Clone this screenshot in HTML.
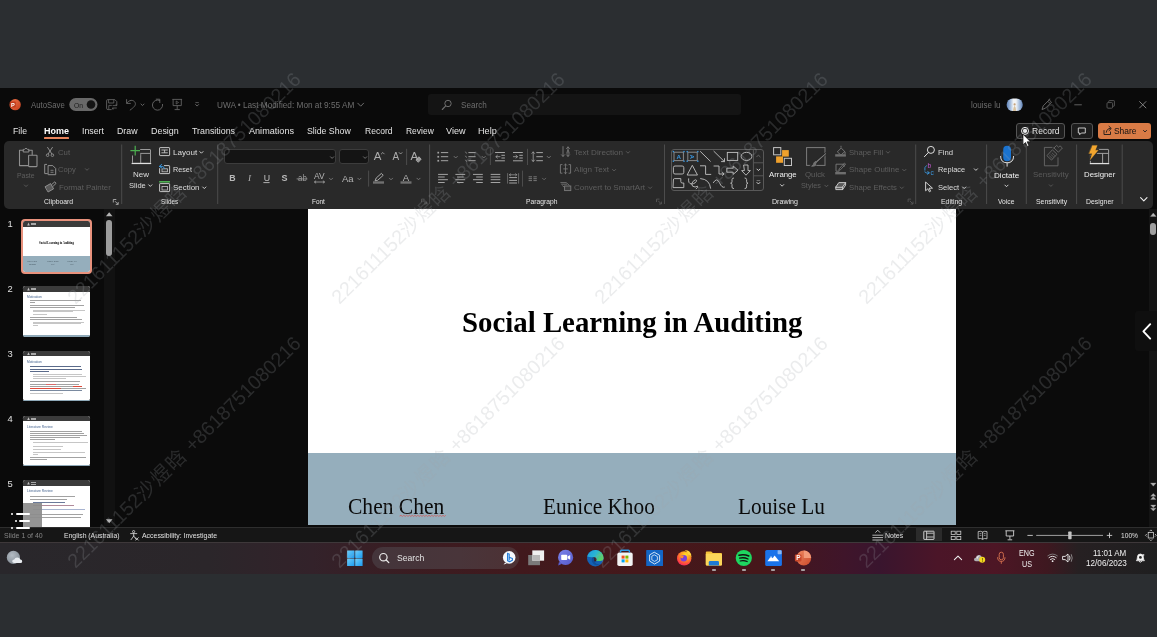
<!DOCTYPE html>
<html lang="en">
<head>
<meta charset="utf-8">
<title>Social Learning in Auditing - PowerPoint</title>
<style>
html,body{margin:0;padding:0}
#app{position:absolute;left:0;top:0;width:1157px;height:637px;will-change:transform}
body{width:1157px;height:637px;position:relative;overflow:hidden;background:#2b2e31;font-family:"Liberation Sans",sans-serif}
.b{position:absolute}
.t{position:absolute;white-space:nowrap;line-height:1;margin:0;padding:0;transform-origin:0 50%}
svg.ic{position:absolute;left:0;top:0;width:1157px;height:637px;overflow:visible}
.wm{position:absolute;white-space:nowrap;line-height:1;font-family:"Liberation Sans","Noto Sans CJK SC",sans-serif;font-size:19.7px;color:rgba(162,164,170,0.21);transform-origin:0 100%;transform:rotate(-44.7deg)}
.wc{letter-spacing:1.6px}
</style>
</head>
<body>
<div id="app">
<div class="b window" style="left:0px;top:88px;width:1157px;height:454px;background:#0a0a0a;"></div>
<div class="b ribbon" style="left:4px;top:141px;width:1149px;height:67.5px;background:#292929;border-radius:5px;"></div>
<div class="b pane-scroll" style="left:104px;top:209px;width:11px;height:317px;background:#111111;"></div>
<div class="b editor" style="left:115px;top:208.5px;width:1035px;height:317.5px;background:#0b0b0b;"></div>
<div class="b slide" style="left:308px;top:208.5px;width:648px;height:316.5px;background:#ffffff;"></div>
<div class="b slide-band" style="left:308px;top:453px;width:648px;height:72px;background:#95aebc;"></div>
<div class="b statusbar" style="left:0px;top:526.5px;width:1157px;height:15px;background:#161616;border-top:1px solid #2e2e2e;box-sizing:border-box;"></div>
<div class="b taskbar" style="left:0px;top:541.5px;width:1157px;height:32.3px;background:linear-gradient(to right,#29272b 0%,#2b262a 18%,#33222a 27%,#3b1c21 36%,#41191d 45%,#45181b 55%,#46171a 66%,#3f152a 73%,#39152e 76%,#4b1528 81%,#4d1625 86%,#3e1820 90.5%,#262022 93.2%,#1f1f20 100%);border-top:1px solid #3e383a;box-sizing:border-box;"></div>
<div class="b search" style="left:428.25px;top:94.25px;width:312.75px;height:20.5px;background:#141414;border-radius:3px;"></div>
<div class="b tab-underline" style="left:43.9px;top:137.4px;width:24.8px;height:1.3px;background:#e8845c;border-radius:0.6px;"></div>
<div class="b btn" style="left:1015.6px;top:123px;width:49.6px;height:15.8px;background:#1c1c1c;border-radius:3px;border:1px solid #555;box-sizing:border-box;"></div>
<div class="b btn" style="left:1071px;top:123px;width:21.5px;height:15.8px;background:#1d1d1d;border-radius:3px;border:1px solid #555;box-sizing:border-box;"></div>
<div class="b btn-share" style="left:1098px;top:123px;width:53.3px;height:15.8px;background:#d97b46;border-radius:3px;"></div>
<div class="b combo" style="left:224.2px;top:149.3px;width:112.1px;height:15px;background:#141414;border-radius:3px;border:1px solid #3c3c3c;box-sizing:border-box;"></div>
<div class="b combo" style="left:338.8px;top:149.3px;width:30.1px;height:15px;background:#141414;border-radius:3px;border:1px solid #3c3c3c;box-sizing:border-box;"></div>
<div class="b gallery" style="left:671.1px;top:149.1px;width:93px;height:41.5px;background:transparent;border-radius:3px;border:1px solid #595959;box-sizing:border-box;"></div>
<div class="b scroll-thumb" style="left:106.3px;top:219.8px;width:5.7px;height:35.8px;background:#9c9c9c;border-radius:2.9px;"></div>
<div class="b thumb-sel" style="left:20.5px;top:219.0px;width:71.8px;height:55.4px;background:#e8917c;border-radius:4px;"></div>
<div class="b thumb" style="left:22.8px;top:221.1px;width:66.9px;height:50.6px;background:#ffffff;border-radius:2.4px;"></div>
<div class="b " style="left:22.8px;top:221.1px;width:66.9px;height:5.7px;background:#3b3b3b;border-radius:2.4px 2.4px 0 0;"></div>
<div class="b " style="left:31.4px;top:222.79999999999998px;width:4.6px;height:0.9px;background:#a8a8a8;"></div>
<div class="b " style="left:31.4px;top:224.29999999999998px;width:4.6px;height:0.9px;background:#a8a8a8;"></div>
<div class="b " style="left:22.8px;top:256.1px;width:66.9px;height:16.1px;background:#95aebc;border-radius:0 0 2.4px 2.4px;"></div>
<div class="b thumb" style="left:22.8px;top:286.1px;width:66.9px;height:50.6px;background:#ffffff;border-radius:2.4px;"></div>
<div class="b " style="left:22.8px;top:286.1px;width:66.9px;height:5.7px;background:#3b3b3b;border-radius:2.4px 2.4px 0 0;"></div>
<div class="b " style="left:31.4px;top:287.8px;width:4.6px;height:0.9px;background:#a8a8a8;"></div>
<div class="b " style="left:31.4px;top:289.3px;width:4.6px;height:0.9px;background:#a8a8a8;"></div>
<div class="b " style="left:22.8px;top:334.80000000000007px;width:66.9px;height:1.9px;background:#8fa9b8;border-radius:0 0 2.4px 2.4px;"></div>
<div class="b " style="left:29.56px;top:299.85px;width:51.35px;height:0.9px;background:#a2a2a2;"></div>
<div class="b " style="left:29.56px;top:301.95px;width:5.19px;height:0.9px;background:#a2a2a2;"></div>
<div class="b " style="left:29.56px;top:304.85px;width:54.25px;height:0.9px;background:#a2a2a2;"></div>
<div class="b " style="left:29.56px;top:306.95px;width:45.12px;height:0.9px;background:#a2a2a2;"></div>
<div class="b " style="left:32.68px;top:309.75px;width:51.87px;height:0.9px;background:#c6c6c6;"></div>
<div class="b " style="left:32.68px;top:311.05px;width:40.46px;height:0.9px;background:#c6c6c6;"></div>
<div class="b " style="left:32.68px;top:313.85px;width:14.0px;height:0.9px;background:#c6c6c6;"></div>
<div class="b " style="left:29.56px;top:316.95px;width:47.2px;height:0.9px;background:#a2a2a2;"></div>
<div class="b " style="left:29.56px;top:318.85px;width:52.39px;height:0.9px;background:#a2a2a2;"></div>
<div class="b " style="left:32.68px;top:321.95px;width:50.83px;height:0.9px;background:#c6c6c6;"></div>
<div class="b " style="left:32.68px;top:323.15px;width:48.24px;height:0.9px;background:#c6c6c6;"></div>
<div class="b " style="left:32.68px;top:324.75px;width:5.19px;height:0.9px;background:#c6c6c6;"></div>
<div class="b thumb" style="left:22.8px;top:350.8px;width:66.9px;height:50.6px;background:#ffffff;border-radius:2.4px;"></div>
<div class="b " style="left:22.8px;top:350.8px;width:66.9px;height:5.7px;background:#3b3b3b;border-radius:2.4px 2.4px 0 0;"></div>
<div class="b " style="left:31.4px;top:352.5px;width:4.6px;height:0.9px;background:#a8a8a8;"></div>
<div class="b " style="left:31.4px;top:354.0px;width:4.6px;height:0.9px;background:#a8a8a8;"></div>
<div class="b " style="left:22.8px;top:399.50000000000006px;width:66.9px;height:1.9px;background:#8fa9b8;border-radius:0 0 2.4px 2.4px;"></div>
<div class="b " style="left:29.56px;top:365.95px;width:51.35px;height:0.9px;background:#5a6a8a;"></div>
<div class="b " style="left:29.56px;top:368.75px;width:52.39px;height:0.9px;background:#5a6a8a;"></div>
<div class="b " style="left:29.56px;top:370.95px;width:19.19px;height:0.9px;background:#5a6a8a;"></div>
<div class="b " style="left:32.68px;top:374.05px;width:49.27px;height:0.9px;background:#c6c6c6;"></div>
<div class="b " style="left:32.68px;top:376.05px;width:52.9px;height:0.9px;background:#c6c6c6;"></div>
<div class="b " style="left:32.68px;top:377.85px;width:33.71px;height:0.9px;background:#c6c6c6;"></div>
<div class="b " style="left:29.56px;top:381.25px;width:50.31px;height:0.9px;background:#a2a2a2;"></div>
<div class="b " style="left:29.56px;top:383.85px;width:49.27px;height:0.9px;background:#a2a2a2;"></div>
<div class="b " style="left:45.64px;top:383.85px;width:10.37px;height:0.9px;background:#d86a6a;"></div>
<div class="b " style="left:29.56px;top:385.95px;width:52.39px;height:0.9px;background:#a2a2a2;"></div>
<div class="b " style="left:72.61px;top:385.95px;width:9.34px;height:0.9px;background:#e04a3a;"></div>
<div class="b " style="left:29.56px;top:388.25px;width:56.02px;height:0.9px;background:#a2a2a2;"></div>
<div class="b " style="left:29.56px;top:388.25px;width:31.64px;height:0.9px;background:#e04a3a;"></div>
<div class="b " style="left:29.56px;top:390.35px;width:52.39px;height:0.9px;background:#7a8aa0;"></div>
<div class="b " style="left:29.56px;top:392.65px;width:33.2px;height:0.9px;background:#c6c6c6;"></div>
<div class="b thumb" style="left:22.8px;top:415.8px;width:66.9px;height:50.6px;background:#ffffff;border-radius:2.4px;"></div>
<div class="b " style="left:22.8px;top:415.8px;width:66.9px;height:5.7px;background:#3b3b3b;border-radius:2.4px 2.4px 0 0;"></div>
<div class="b " style="left:31.4px;top:417.5px;width:4.6px;height:0.9px;background:#a8a8a8;"></div>
<div class="b " style="left:31.4px;top:419.0px;width:4.6px;height:0.9px;background:#a8a8a8;"></div>
<div class="b " style="left:22.8px;top:464.50000000000006px;width:66.9px;height:1.9px;background:#8fa9b8;border-radius:0 0 2.4px 2.4px;"></div>
<div class="b " style="left:29.56px;top:430.55px;width:52.39px;height:0.9px;background:#a2a2a2;"></div>
<div class="b " style="left:29.56px;top:432.75px;width:54.46px;height:0.9px;background:#a2a2a2;"></div>
<div class="b " style="left:29.56px;top:434.85px;width:57.57px;height:0.9px;background:#a2a2a2;"></div>
<div class="b " style="left:29.56px;top:436.95px;width:50.83px;height:0.9px;background:#a2a2a2;"></div>
<div class="b " style="left:29.56px;top:438.65px;width:25.41px;height:0.9px;background:#a2a2a2;"></div>
<div class="b " style="left:32.68px;top:441.95px;width:54.98px;height:0.9px;background:#c6c6c6;"></div>
<div class="b " style="left:32.68px;top:445.65px;width:30.6px;height:0.9px;background:#c6c6c6;"></div>
<div class="b " style="left:32.68px;top:448.85px;width:28.53px;height:0.9px;background:#c6c6c6;"></div>
<div class="b " style="left:32.68px;top:451.95px;width:52.39px;height:0.9px;background:#c6c6c6;"></div>
<div class="b " style="left:32.68px;top:453.95px;width:5.19px;height:0.9px;background:#c6c6c6;"></div>
<div class="b " style="left:29.56px;top:457.15px;width:56.54px;height:0.9px;background:#a2a2a2;"></div>
<div class="b " style="left:29.56px;top:459.25px;width:17.63px;height:0.9px;background:#a2a2a2;"></div>
<div class="b thumb" style="left:22.8px;top:480.3px;width:66.9px;height:46.5px;background:#ffffff;border-radius:2.4px 2.4px 0 0;"></div>
<div class="b " style="left:22.8px;top:480.3px;width:66.9px;height:5.7px;background:#3b3b3b;border-radius:2.4px 2.4px 0 0;"></div>
<div class="b " style="left:31.4px;top:482.0px;width:4.6px;height:0.9px;background:#a8a8a8;"></div>
<div class="b " style="left:31.4px;top:483.5px;width:4.6px;height:0.9px;background:#a8a8a8;"></div>
<div class="b " style="left:29.56px;top:496.15px;width:45.12px;height:0.9px;background:#a2a2a2;"></div>
<div class="b " style="left:29.56px;top:498.55px;width:37.86px;height:0.9px;background:#a2a2a2;"></div>
<div class="b " style="left:32.68px;top:501.85px;width:32.16px;height:0.9px;background:#6a7a9a;"></div>
<div class="b " style="left:32.68px;top:505.05px;width:41.49px;height:0.9px;background:#b08a9a;"></div>
<div class="b " style="left:32.68px;top:508.55px;width:52.39px;height:0.9px;background:#a8b4d0;"></div>
<div class="b " style="left:29.56px;top:514.05px;width:53.42px;height:0.9px;background:#a2a2a2;"></div>
<div class="b " style="left:29.56px;top:516.65px;width:51.87px;height:0.9px;background:#a2a2a2;"></div>
<div class="b float-btn" style="left:22.8px;top:503.1px;width:19.2px;height:23.7px;background:rgba(140,140,140,0.93);"></div>
<div class="b " style="left:10.9px;top:512.5px;width:2.6px;height:2.6px;background:#ffffff;border-radius:1.3px;"></div>
<div class="b " style="left:16.1px;top:512.5px;width:14.0px;height:2.6px;background:#ffffff;border-radius:1.3px;"></div>
<div class="b " style="left:14.5px;top:519.5px;width:2.6px;height:2.6px;background:#ffffff;border-radius:1.3px;"></div>
<div class="b " style="left:19.2px;top:519.5px;width:10.900000000000002px;height:2.6px;background:#ffffff;border-radius:1.3px;"></div>
<div class="b " style="left:10.9px;top:526.7px;width:2.6px;height:2.6px;background:#ffffff;border-radius:1.3px;"></div>
<div class="b " style="left:16.1px;top:526.7px;width:14.0px;height:2.6px;background:#ffffff;border-radius:1.3px;"></div>
<div class="b editor-scroll" style="left:1149.4px;top:209px;width:7.6px;height:317.5px;background:#141414;"></div>
<div class="b scroll-thumb" style="left:1150.4px;top:222.8px;width:5.8px;height:12px;background:#a0a0a0;border-radius:2.9px;"></div>
<div class="b pane-toggle" style="left:1134.6px;top:310.6px;width:22.4px;height:40.4px;background:#0f0f0f;border-radius:3px 0 0 3px;"></div>
<div class="b view-sel" style="left:915.5px;top:527.4px;width:26.8px;height:14.1px;background:#2b2b2b;"></div>
<div class="b tb-search" style="left:371.6px;top:546.8px;width:147px;height:22px;background:linear-gradient(to right,#44353b,#49353a 60%,#4d3134);border-radius:11px;"></div>
<div class="b tb-ind" style="left:711.9px;top:569px;width:4.2px;height:1.6px;background:#a6a0a2;border-radius:0.8px;"></div>
<div class="b tb-ind" style="left:741.6999999999999px;top:569px;width:4.2px;height:1.6px;background:#a6a0a2;border-radius:0.8px;"></div>
<div class="b tb-ind" style="left:771.1999999999999px;top:569px;width:4.2px;height:1.6px;background:#a6a0a2;border-radius:0.8px;"></div>
<div class="b tb-ind" style="left:800.9px;top:569px;width:4.2px;height:1.6px;background:#a6a0a2;border-radius:0.8px;"></div>
<svg class="ic" viewBox="0 0 1157 637" width="1157" height="637">
<defs><linearGradient id="ppg" x1="0" y1="0" x2="1" y2="1"><stop offset="0" stop-color="#f0744a"/><stop offset="1" stop-color="#c43e1c"/></linearGradient></defs>
<circle cx="15.2" cy="104.7" r="5.6" stroke="none" stroke-width="0" fill="url(#ppg)" />
<rect x="9.8" y="101.6" width="6" height="6" rx="1" stroke="none" stroke-width="0" fill="#c13b1b" />
<text x="11.1" y="106.6" font-family="Liberation Sans, sans-serif" font-size="5.6" font-weight="bold" fill="#fff">P</text>
<rect x="69.25" y="98" width="28.25" height="13" rx="6.5" stroke="none" stroke-width="0" fill="#686868" />
<circle cx="91" cy="104.5" r="4.3" stroke="none" stroke-width="0" fill="#141414" />
<path d="M111.6,109.6 h-3.6 q-1.4,0 -1.4,-1.4 v-7.4 q0,-1.2 1.2,-1.2 h7 l2,2 v3" stroke="#686868" stroke-width="0.85" fill="none" stroke-linejoin="round"/>
<path d="M108.6,99.8 v3.2 h5.2 v-3.2 M108.8,109.4 v-4 h3" stroke="#686868" stroke-width="0.8" fill="none" />
<path d="M112.6,105.6 h4.2 v-1.4 M116.8,108 h-4.2 v1.4 M115.6,104.4 l1.3,1.2 M113.8,109.2 l-1.3,-1.2" stroke="#686868" stroke-width="0.8" fill="none" stroke-linejoin="round"/>
<path d="M126.6,99.6 v3.8 h3.8 M126.9,103.2 c2,-3.6 6.6,-3.8 8.2,-0.6 c1.2,2.8 -1.4,4.8 -4.9,7.4" stroke="#686868" stroke-width="0.9" fill="none" stroke-linecap="round" stroke-linejoin="round"/>
<path d="M140.988,104.044 L142.5,105.556 L144.012,104.044" stroke="#6e6e6e" stroke-width="0.9" fill="none" stroke-linecap="round" stroke-linejoin="round"/>
<path d="M159.6,100.4 a5.1,5.1 0 1 0 3,4" stroke="#686868" stroke-width="0.9" fill="none" stroke-linecap="round"/>
<path d="M156.2,99.2 h3.6 v3.4" stroke="#686868" stroke-width="0.9" fill="none" stroke-linecap="round" stroke-linejoin="round"/>
<path d="M172.3,99.4 h9.8 M173.1,99.4 v6.2 h8.2 v-6.2 M177.2,105.6 v3.8 M174.6,109.6 h5.2" stroke="#686868" stroke-width="0.85" fill="none" />
<path d="M176.2,101 v3 l2.3,-1.5 z" stroke="#686868" stroke-width="0.7" fill="none" />
<path d="M195.4,102.6 h3.4" stroke="#686868" stroke-width="0.8" fill="none" />
<path d="M195.588,104.544 L197.1,106.056 L198.612,104.544" stroke="#6e6e6e" stroke-width="0.9" fill="none" stroke-linecap="round" stroke-linejoin="round"/>
<path d="M357.8,103.2 l2.9,3 l2.9,-3" stroke="#6e6e6e" stroke-width="1" fill="none" stroke-linecap="round" stroke-linejoin="round"/>
<circle cx="448" cy="103.5" r="3.2" stroke="#6e6e6e" stroke-width="1" fill="none" />
<path d="M445.7,105.9 l-3.4,3.6" stroke="#6e6e6e" stroke-width="1.1" fill="none" stroke-linecap="round"/>
<defs><linearGradient id="av" x1="0" y1="0" x2="1" y2="0"><stop offset="0" stop-color="#5d7fb4"/><stop offset="0.22" stop-color="#9fb9dc"/><stop offset="0.42" stop-color="#f2f4f6"/><stop offset="0.58" stop-color="#f2f4f6"/><stop offset="0.78" stop-color="#a9c0de"/><stop offset="1" stop-color="#5d7fb4"/></linearGradient></defs>
<rect x="1006.6" y="98.5" width="16.2" height="12.6" rx="6.3" stroke="none" stroke-width="0" fill="url(#av)" />
<path d="M1013,111 q0.2,-4 1.6,-5.2 q1.4,1.2 1.6,5.2 z" stroke="none" stroke-width="0" fill="#d8c2a0" />
<circle cx="1014.6" cy="104.4" r="1.1" stroke="none" stroke-width="0" fill="#c4a27e" />
<path d="M1042,109.5 l1.2,-3.6 l6,-6 l2.3,2.3 l-6,6 z M1047.8,101.3 l2.3,2.3" stroke="#6e6e6e" stroke-width="0.9" fill="none" stroke-linejoin="round"/>
<path d="M1048.6,99.6 l1.6,-0.6" stroke="#6e6e6e" stroke-width="0.9" fill="none" />
<line x1="1074.3" y1="104.8" x2="1081.8" y2="104.8" stroke="#6a6a6a" stroke-width="0.9" />
<rect x="1107" y="102.6" width="5.6" height="5.6" rx="1" stroke="#5e5e5e" stroke-width="0.85" fill="none" />
<path d="M1108.8,102.4 v-1.2 q0,-0.6 0.6,-0.6 h4.4 q0.6,0 0.6,0.6 v4.4 q0,0.6 -0.6,0.6 h-1.1" stroke="#5e5e5e" stroke-width="0.85" fill="none" />
<path d="M1139.3,101.3 l6.9,6.9 M1146.2,101.3 l-6.9,6.9" stroke="#8a8a8a" stroke-width="0.9" fill="none" />
<circle cx="1025" cy="130.9" r="3.5" stroke="#f0f0f0" stroke-width="1" fill="none" />
<circle cx="1025" cy="130.9" r="2.1" stroke="none" stroke-width="0" fill="#f4f4f4" />
<path d="M1078.3,128 h7 v5 h-4 l-1.6,1.7 v-1.7 h-1.4 z" stroke="#d8d8d8" stroke-width="0.9" fill="none" stroke-linejoin="round"/>
<path d="M1104,130.5 v4 h6.5 v-2.5 M1106.3,132.3 c0.3,-2.5 1.8,-3.8 4,-3.9 M1109,126.3 l2.3,2.2 l-2.3,2.2" stroke="#1a1a1a" stroke-width="0.9" fill="none" stroke-linejoin="round" stroke-linecap="round"/>
<path d="M1143.488,130.444 L1145,131.956 L1146.512,130.444" stroke="#1a1a1a" stroke-width="0.9" fill="none" stroke-linecap="round" stroke-linejoin="round"/>
<path d="M23.2,150.3 h-3.7 v15.3 h8.6 M28.9,150.3 h3.3 v4.3" stroke="#8f8f8f" stroke-width="1.1" fill="none" stroke-linejoin="round" stroke-linecap="round"/>
<path d="M23.2,151.6 v-2.2 h1.2 q1.6,-2.4 3.2,0 h1.3 v2.2 z" stroke="#8f8f8f" stroke-width="1" fill="none" stroke-linejoin="round" stroke-linecap="round"/>
<rect x="28.6" y="155.2" width="8.4" height="11.4" rx="0.6" stroke="#8f8f8f" stroke-width="1.1" fill="none" />
<path d="M24.404,185.002 L26,186.598 L27.596,185.002" stroke="#5e5e5e" stroke-width="0.9" fill="none" stroke-linecap="round" stroke-linejoin="round"/>
<path d="M47.6,147.4 l4.3,6.6 M52.4,147.4 l-4.3,6.6" stroke="#8f8f8f" stroke-width="1" fill="none" stroke-linejoin="round" stroke-linecap="round"/>
<circle cx="47.6" cy="155.2" r="1.3" stroke="#8f8f8f" stroke-width="0.9" fill="none" />
<circle cx="52.4" cy="155.2" r="1.3" stroke="#8f8f8f" stroke-width="0.9" fill="none" />
<path d="M46.6,164.4 h-1.9 v9.2 h2.6" stroke="#8f8f8f" stroke-width="1" fill="none" stroke-linejoin="round" stroke-linecap="round"/>
<path d="M48.5,165.6 h4.3 l2.9,2.9 v6.2 h-7.2 z" stroke="#8f8f8f" stroke-width="1" fill="none" stroke-linejoin="round" stroke-linecap="round"/>
<path d="M50.5,170.3 h3 M50.5,172.3 h3" stroke="#8f8f8f" stroke-width="0.8" fill="none" />
<path d="M85.404,168.702 L87,170.298 L88.596,168.702" stroke="#5e5e5e" stroke-width="0.9" fill="none" stroke-linecap="round" stroke-linejoin="round"/>
<path d="M45.4,186.6 l5.2,-3 l3,5.2 l-5.2,3 z" stroke="#8f8f8f" stroke-width="1" fill="#5a5a5a" stroke-linejoin="round" stroke-linecap="round"/>
<path d="M51.8,184.4 l3,-2.6 l1.2,1.6 l-2.6,2.6" stroke="#8f8f8f" stroke-width="1" fill="none" stroke-linejoin="round" stroke-linecap="round"/>
<path d="M113.3,202.5 V199.5 H116.3" stroke="#bdbdbd" stroke-width="0.8" fill="none" />
<path d="M115.0,201.2 L118.0,204.2 M118.2,202 V204.4 H115.8" stroke="#bdbdbd" stroke-width="0.8" fill="none" />
<line x1="121.7" y1="144.5" x2="121.7" y2="204" stroke="#4c4c4c" stroke-width="1" />
<rect x="132.5" y="149.5" width="18" height="13.8" rx="0.5" stroke="#9a9a9a" stroke-width="1" fill="none" />
<line x1="132.5" y1="153.4" x2="150.5" y2="153.4" stroke="#9a9a9a" stroke-width="1" />
<line x1="140.7" y1="153.4" x2="140.7" y2="163.3" stroke="#9a9a9a" stroke-width="1" />
<line x1="131.6" y1="163.5" x2="151.2" y2="163.5" stroke="#e0e0e0" stroke-width="1.2" />
<rect x="130.3" y="145.6" width="9.9" height="9.9" rx="0" stroke="none" stroke-width="0" fill="#292929" />
<path d="M135.2,145.8 v9.7 M130.4,150.6 h9.6" stroke="#4caf50" stroke-width="1.2" fill="none" />
<path d="M148.704,184.802 L150.3,186.398 L151.89600000000002,184.802" stroke="#dedede" stroke-width="0.9" fill="none" stroke-linecap="round" stroke-linejoin="round"/>
<rect x="159.6" y="147.6" width="10" height="8" rx="0.5" stroke="#c4c4c4" stroke-width="1" fill="none" />
<path d="M161.4,150 h6.4 M161.4,152.8 h6.4 M164.6,150 v2.8" stroke="#c4c4c4" stroke-width="0.9" fill="none" />
<path d="M199.804,151.602 L201.4,153.198 L202.996,151.602" stroke="#dedede" stroke-width="0.9" fill="none" stroke-linecap="round" stroke-linejoin="round"/>
<rect x="159.6" y="165.6" width="10" height="8" rx="0.5" stroke="#c4c4c4" stroke-width="1" fill="none" />
<rect x="162" y="168.8" width="5.4" height="3" rx="0" stroke="#c4c4c4" stroke-width="0.8" fill="#3a3a3a" />
<rect x="158.6" y="163.6" width="5.4" height="4.6" rx="0" stroke="none" stroke-width="0" fill="#292929" />
<path d="M159.4,166.4 l2.2,-2 M159.4,166.4 l2.4,1.6 M159.6,166.4 h2.6 q2,0.1 2.2,2.2" stroke="#3a96dd" stroke-width="1" fill="none" stroke-linejoin="round" stroke-linecap="round"/>
<rect x="159.6" y="183.6" width="10" height="8" rx="0.5" stroke="#c4c4c4" stroke-width="1" fill="none" />
<rect x="162" y="186.4" width="5.4" height="3.6" rx="0" stroke="#c4c4c4" stroke-width="0.8" fill="none" />
<line x1="159.2" y1="181.8" x2="170" y2="181.8" stroke="#4caf50" stroke-width="1.6" />
<path d="M202.704,187.002 L204.3,188.598 L205.89600000000002,187.002" stroke="#dedede" stroke-width="0.9" fill="none" stroke-linecap="round" stroke-linejoin="round"/>
<line x1="217.7" y1="144.5" x2="217.7" y2="204" stroke="#4c4c4c" stroke-width="1" />
<path d="M330.504,156.802 L332.1,158.398 L333.696,156.802" stroke="#7a7a7a" stroke-width="0.9" fill="none" stroke-linecap="round" stroke-linejoin="round"/>
<path d="M363.504,156.802 L365.1,158.398 L366.696,156.802" stroke="#7a7a7a" stroke-width="0.9" fill="none" stroke-linecap="round" stroke-linejoin="round"/>
<path d="M381.4,153.9 l1.4,-1.4 l1.4,1.4" stroke="#adadad" stroke-width="0.8" fill="none" stroke-linejoin="round" stroke-linecap="round"/>
<path d="M399.2,152.6 l1.4,1.4 l1.4,-1.4" stroke="#adadad" stroke-width="0.8" fill="none" stroke-linejoin="round" stroke-linecap="round"/>
<line x1="406.6" y1="148.8" x2="406.6" y2="165" stroke="#4c4c4c" stroke-width="1" />
<path d="M416.2,159.8 l2.6,-3 l2.4,2.2 l-2.6,3 z" stroke="#adadad" stroke-width="0.9" fill="#9a9a9a" stroke-linejoin="round" stroke-linecap="round"/>
<line x1="263.4" y1="182.6" x2="269.6" y2="182.6" stroke="#c0c0c0" stroke-width="0.9" />
<line x1="296.6" y1="178.9" x2="307.4" y2="178.9" stroke="#9a9a9a" stroke-width="0.8" />
<path d="M314.6,182 h9.8 M315.8,180.9 l-1.3,1.1 l1.3,1.1 M323.2,180.9 l1.3,1.1 l-1.3,1.1" stroke="#b4b4b4" stroke-width="0.7" fill="none" stroke-linejoin="round" stroke-linecap="round"/>
<path d="M329.404,178.202 L331,179.798 L332.596,178.202" stroke="#7a7a7a" stroke-width="0.9" fill="none" stroke-linecap="round" stroke-linejoin="round"/>
<path d="M357.804,178.202 L359.4,179.798 L360.996,178.202" stroke="#7a7a7a" stroke-width="0.9" fill="none" stroke-linecap="round" stroke-linejoin="round"/>
<line x1="368.6" y1="170.6" x2="368.6" y2="186.6" stroke="#4c4c4c" stroke-width="1" />
<path d="M375.2,180.6 l1,-2.6 l5.2,-4.6 l1.8,1.9 l-5.2,4.7 z" stroke="#b4b4b4" stroke-width="0.9" fill="none" stroke-linejoin="round" stroke-linecap="round"/>
<rect x="373" y="181.3" width="11" height="2.4" rx="0" stroke="none" stroke-width="0" fill="#707070" />
<path d="M389.404,178.202 L391,179.798 L392.596,178.202" stroke="#7a7a7a" stroke-width="0.9" fill="none" stroke-linecap="round" stroke-linejoin="round"/>
<rect x="400.5" y="181.3" width="11" height="2.4" rx="0" stroke="none" stroke-width="0" fill="#707070" />
<path d="M416.904,178.202 L418.5,179.798 L420.096,178.202" stroke="#7a7a7a" stroke-width="0.9" fill="none" stroke-linecap="round" stroke-linejoin="round"/>
<path d="M421.5,202.1 V199.1 H424.5" stroke="#5c5c5c" stroke-width="0.8" fill="none" />
<path d="M423.2,200.79999999999998 L426.2,203.79999999999998 M426.4,201.6 V204.0 H424" stroke="#5c5c5c" stroke-width="0.8" fill="none" />
<line x1="429.6" y1="144.5" x2="429.6" y2="204" stroke="#4c4c4c" stroke-width="1" />
<rect x="437.4" y="151.79999999999998" width="1.7" height="1.7" rx="0" stroke="none" stroke-width="0" fill="#a4a4a4" />
<line x1="440.9" y1="152.6" x2="448.2" y2="152.6" stroke="#a4a4a4" stroke-width="1" />
<rect x="437.4" y="155.89999999999998" width="1.7" height="1.7" rx="0" stroke="none" stroke-width="0" fill="#a4a4a4" />
<line x1="440.9" y1="156.7" x2="448.2" y2="156.7" stroke="#a4a4a4" stroke-width="1" />
<rect x="437.4" y="159.89999999999998" width="1.7" height="1.7" rx="0" stroke="none" stroke-width="0" fill="#a4a4a4" />
<line x1="440.9" y1="160.7" x2="448.2" y2="160.7" stroke="#a4a4a4" stroke-width="1" />
<path d="M454.104,156.402 L455.7,157.998 L457.296,156.402" stroke="#7a7a7a" stroke-width="0.9" fill="none" stroke-linecap="round" stroke-linejoin="round"/>
<line x1="465.4" y1="151.7" x2="466.6" y2="153.5" stroke="#a4a4a4" stroke-width="0.7" />
<line x1="468.4" y1="152.6" x2="475.6" y2="152.6" stroke="#a4a4a4" stroke-width="1" />
<line x1="465.4" y1="155.79999999999998" x2="466.6" y2="157.6" stroke="#a4a4a4" stroke-width="0.7" />
<line x1="468.4" y1="156.7" x2="475.6" y2="156.7" stroke="#a4a4a4" stroke-width="1" />
<line x1="465.4" y1="159.79999999999998" x2="466.6" y2="161.6" stroke="#a4a4a4" stroke-width="0.7" />
<line x1="468.4" y1="160.7" x2="475.6" y2="160.7" stroke="#a4a4a4" stroke-width="1" />
<path d="M482.104,156.402 L483.7,157.998 L485.296,156.402" stroke="#7a7a7a" stroke-width="0.9" fill="none" stroke-linecap="round" stroke-linejoin="round"/>
<line x1="490.4" y1="148.8" x2="490.4" y2="165" stroke="#4c4c4c" stroke-width="1" />
<path d="M495.1,152.5 h9.8 M495.1,160.8 h9.8 M501.4,155.3 h3.5 M501.4,158 h3.5" stroke="#a4a4a4" stroke-width="1" fill="none" />
<path d="M496,156.7 h4 M497.4,155.3 l-1.5,1.4 l1.5,1.4" stroke="#a4a4a4" stroke-width="0.8" fill="none" stroke-linejoin="round" stroke-linecap="round"/>
<path d="M513,152.5 h9.8 M513,160.8 h9.8 M519.3,155.3 h3.5 M519.3,158 h3.5" stroke="#a4a4a4" stroke-width="1" fill="none" />
<path d="M513.4,156.7 h4 M516,155.3 l1.5,1.4 l-1.5,1.4" stroke="#a4a4a4" stroke-width="0.8" fill="none" stroke-linejoin="round" stroke-linecap="round"/>
<line x1="527.5" y1="148.8" x2="527.5" y2="165" stroke="#4c4c4c" stroke-width="1" />
<path d="M536.3,152.6 h6.6 M536.3,156.7 h6.6 M536.3,160.7 h6.6" stroke="#a4a4a4" stroke-width="1" fill="none" />
<path d="M533.2,152 v9.4 M531.9,153.4 l1.3,-1.5 l1.3,1.5 M531.9,160 l1.3,1.5 l1.3,-1.5" stroke="#a4a4a4" stroke-width="0.8" fill="none" stroke-linejoin="round" stroke-linecap="round"/>
<path d="M547.204,156.402 L548.8,157.998 L550.396,156.402" stroke="#7a7a7a" stroke-width="0.9" fill="none" stroke-linecap="round" stroke-linejoin="round"/>
<path d="M438.1,174.4 h9.8 M438.1,177.0 h6.6 M438.1,179.7 h9.8 M438.1,182.5 h6.6" stroke="#a4a4a4" stroke-width="1" fill="none" />
<path d="M455.4,174.4 h9.8 M457,177.0 h6.6 M455.4,179.7 h9.8 M457,182.5 h6.6" stroke="#a4a4a4" stroke-width="1" fill="none" />
<path d="M473,174.4 h9.8 M476.2,177.0 h6.6 M473,179.7 h9.8 M476.2,182.5 h6.6" stroke="#a4a4a4" stroke-width="1" fill="none" />
<path d="M490.7,174.4 h9.6 M490.7,177.0 h9.6 M490.7,179.7 h9.6 M490.7,182.5 h9.6" stroke="#a4a4a4" stroke-width="1" fill="none" />
<path d="M507.6,173.2 v10.4 M518.6,173.2 v10.4" stroke="#6e6e6e" stroke-width="0.9" fill="none" />
<path d="M509.4,174.8 h7.4 M510.6,173.8 l-1.2,1 l1.2,1 M515.6,173.8 l1.2,1 l-1.2,1" stroke="#a4a4a4" stroke-width="0.7" fill="none" stroke-linejoin="round" stroke-linecap="round"/>
<path d="M509.2,177.6 h7.8 M509.2,180.4 h7.8 M509.2,183 h7.8" stroke="#a4a4a4" stroke-width="1" fill="none" />
<line x1="522.5" y1="170.6" x2="522.5" y2="186.6" stroke="#4c4c4c" stroke-width="1" />
<path d="M528.6,176.8 h3.4 M528.6,178.7 h3.4 M528.6,180.6 h3.4 M533.4,176.8 h3.4 M533.4,178.7 h3.4 M533.4,180.6 h3.4" stroke="#808080" stroke-width="0.9" fill="none" />
<path d="M542.504,178.202 L544.1,179.798 L545.696,178.202" stroke="#6a6a6a" stroke-width="0.9" fill="none" stroke-linecap="round" stroke-linejoin="round"/>
<path d="M563,146.6 v9.8 M561.5,154.8 l1.5,1.6 l1.5,-1.6" stroke="#7c7c7c" stroke-width="0.9" fill="none" stroke-linejoin="round" stroke-linecap="round"/>
<path d="M568,147 v9.4 M566.5,148.5 l1.5,-1.6 l1.5,1.6 M566.5,154.8 l1.5,1.6 l1.5,-1.6" stroke="#7c7c7c" stroke-width="0.9" fill="none" stroke-linejoin="round" stroke-linecap="round"/>
<path d="M566.6,153.2 l1.4,-3.4 l1.4,3.4" stroke="#7c7c7c" stroke-width="0.7" fill="none" stroke-linejoin="round" stroke-linecap="round"/>
<path d="M626.404,151.602 L628,153.198 L629.596,151.602" stroke="#5e5e5e" stroke-width="0.9" fill="none" stroke-linecap="round" stroke-linejoin="round"/>
<path d="M562.4,164.6 h-2 v8.6 h2 M568.6,164.6 h2 v8.6 h-2" stroke="#7c7c7c" stroke-width="0.9" fill="none" />
<path d="M565.5,164 v9.8 M564.3,165.3 l1.2,-1.3 l1.2,1.3 M564.3,172.5 l1.2,1.3 l1.2,-1.3 M563.6,168.9 h3.8" stroke="#7c7c7c" stroke-width="0.8" fill="none" stroke-linejoin="round" stroke-linecap="round"/>
<path d="M612.504,169.402 L614.1,170.998 L615.696,169.402" stroke="#5e5e5e" stroke-width="0.9" fill="none" stroke-linecap="round" stroke-linejoin="round"/>
<path d="M560.8,182.6 h5.4 l3,2.6 M561.6,184.2 h5 M562.6,185.8 l2,1.6" stroke="#7c7c7c" stroke-width="0.8" fill="none" stroke-linejoin="round" stroke-linecap="round"/>
<rect x="564.6" y="186" width="6.2" height="4.6" rx="0" stroke="#7c7c7c" stroke-width="0.9" fill="#3a3a3a" />
<path d="M648.504,187.002 L650.1,188.598 L651.696,187.002" stroke="#5e5e5e" stroke-width="0.9" fill="none" stroke-linecap="round" stroke-linejoin="round"/>
<path d="M656.5,202.1 V199.1 H659.5" stroke="#5c5c5c" stroke-width="0.8" fill="none" />
<path d="M658.2,200.79999999999998 L661.2,203.79999999999998 M661.4,201.6 V204.0 H659" stroke="#5c5c5c" stroke-width="0.8" fill="none" />
<line x1="664.5" y1="144.5" x2="664.5" y2="204" stroke="#4c4c4c" stroke-width="1" />
<line x1="753.4" y1="149.6" x2="753.4" y2="190.2" stroke="#595959" stroke-width="1" />
<line x1="753.4" y1="162.8" x2="763.6" y2="162.8" stroke="#595959" stroke-width="1" />
<line x1="753.4" y1="175.8" x2="763.6" y2="175.8" stroke="#595959" stroke-width="1" />
<path d="M756.7,156.8 l1.7,-1.7 l1.7,1.7" stroke="#6a6a6a" stroke-width="0.9" fill="none" stroke-linejoin="round" stroke-linecap="round"/>
<path d="M756.888,169.044 L758.4,170.556 L759.9119999999999,169.044" stroke="#e0e0e0" stroke-width="0.9" fill="none" stroke-linecap="round" stroke-linejoin="round"/>
<line x1="756.6" y1="180.6" x2="760.2" y2="180.6" stroke="#8a8a8a" stroke-width="0.8" />
<path d="M756.888,182.444 L758.4,183.956 L759.9119999999999,182.444" stroke="#e0e0e0" stroke-width="0.9" fill="none" stroke-linecap="round" stroke-linejoin="round"/>
<rect x="674.0" y="152.2" width="9.4" height="8.4" rx="0" stroke="#8a8a8a" stroke-width="1" fill="none" />
<rect x="672.6999999999999" y="150.9" width="1.4" height="1.4" rx="0" stroke="none" stroke-width="0" fill="#3a96dd" />
<rect x="683.3" y="150.9" width="1.4" height="1.4" rx="0" stroke="none" stroke-width="0" fill="#3a96dd" />
<rect x="672.6999999999999" y="160.5" width="1.4" height="1.4" rx="0" stroke="none" stroke-width="0" fill="#3a96dd" />
<rect x="683.3" y="160.5" width="1.4" height="1.4" rx="0" stroke="none" stroke-width="0" fill="#3a96dd" />
<rect x="687.8000000000001" y="152.2" width="9.4" height="8.4" rx="0" stroke="#8a8a8a" stroke-width="1" fill="none" />
<rect x="686.5" y="150.9" width="1.4" height="1.4" rx="0" stroke="none" stroke-width="0" fill="#3a96dd" />
<rect x="697.1" y="150.9" width="1.4" height="1.4" rx="0" stroke="none" stroke-width="0" fill="#3a96dd" />
<rect x="686.5" y="160.5" width="1.4" height="1.4" rx="0" stroke="none" stroke-width="0" fill="#3a96dd" />
<rect x="697.1" y="160.5" width="1.4" height="1.4" rx="0" stroke="none" stroke-width="0" fill="#3a96dd" />
<text x="676.6" y="158.8" font-family="Liberation Sans, sans-serif" font-size="6.2" font-weight="bold" fill="#3a96dd">A</text>
<text x="0" y="0" transform="translate(690.4,154.6) rotate(90)" font-family="Liberation Sans, sans-serif" font-size="6.2" font-weight="bold" fill="#3a96dd">A</text>
<line x1="700.2" y1="151.3" x2="710.6" y2="161.5" stroke="#c2c2c2" stroke-width="0.9" />
<path d="M713.9,151.3 l10.4,10.2 M724.5,158.6 v3 h-3" stroke="#c2c2c2" stroke-width="0.9" fill="none" stroke-linejoin="round" stroke-linecap="round"/>
<rect x="727.3" y="152.4" width="10.4" height="8" rx="0" stroke="#c2c2c2" stroke-width="0.9" fill="none" />
<ellipse cx="746.5" cy="156.4" rx="5.4" ry="4.1" stroke="#c2c2c2" stroke-width="0.9" fill="none" />
<rect x="673.4" y="166" width="10.4" height="8" rx="1.6" stroke="#c2c2c2" stroke-width="0.9" fill="none" />
<path d="M687.3,174.7 l5,-9.4 l5,9.4 z" stroke="#c2c2c2" stroke-width="0.9" fill="none" stroke-linejoin="round" stroke-linecap="round"/>
<path d="M700.4,165.8 h5.2 v8.6 h5.2" stroke="#c2c2c2" stroke-width="0.9" fill="none" stroke-linejoin="round" stroke-linecap="round"/>
<path d="M714,166 h5 v8 h4.8 M722.4,172.6 l1.7,1.4 l-1.7,1.4" stroke="#c2c2c2" stroke-width="0.9" fill="none" stroke-linejoin="round" stroke-linecap="round"/>
<path d="M727.2,168.2 h6 v-2.2 l4.8,4.2 l-4.8,4.2 v-2.2 h-6 z" stroke="#c2c2c2" stroke-width="0.9" fill="none" stroke-linejoin="round" stroke-linecap="round"/>
<path d="M744,165 h4 v5.6 h2.4 l-4.4,4.6 l-4.4,-4.6 h2.4 z" stroke="#c2c2c2" stroke-width="0.9" fill="none" stroke-linejoin="round" stroke-linecap="round"/>
<path d="M673.4,179.6 q0,-1 1,-1 h6.4 v3 q0,1.4 1.4,1.4 h1.6 v4.6 h-10.4 z" stroke="#c2c2c2" stroke-width="0.9" fill="none" stroke-linejoin="round" stroke-linecap="round"/>
<path d="M688.6,178.8 q-0.6,5 3,5.2 q4.6,-0.6 5,-3.6 q-0.6,-1.4 -3,0.4 q-3.4,3 -1,5.4 q2.6,1.6 5,0 q0.6,1.4 -1.4,2.6" stroke="#c2c2c2" stroke-width="0.9" fill="none" stroke-linejoin="round" stroke-linecap="round"/>
<path d="M700.6,178.6 q9,0.6 10,9.6" stroke="#c2c2c2" stroke-width="0.9" fill="none" stroke-linejoin="round" stroke-linecap="round"/>
<path d="M713.4,182.6 q3.4,-5.6 6,0 q2.6,5.8 5,4.6" stroke="#c2c2c2" stroke-width="0.9" fill="none" stroke-linejoin="round" stroke-linecap="round"/>
<path d="M733.6,178 q-1.6,0 -1.6,1.6 v2.2 q0,1.4 -1.4,1.4 q1.4,0 1.4,1.4 v2.4 q0,1.6 1.6,1.6" stroke="#c2c2c2" stroke-width="0.9" fill="none" stroke-linejoin="round" stroke-linecap="round"/>
<path d="M745,178 q1.6,0 1.6,1.6 v2.2 q0,1.4 1.4,1.4 q-1.4,0 -1.4,1.4 v2.4 q0,1.6 -1.6,1.6" stroke="#c2c2c2" stroke-width="0.9" fill="none" stroke-linejoin="round" stroke-linecap="round"/>
<rect x="773.6" y="147.6" width="7.2" height="7.2" rx="0" stroke="#c4c4c4" stroke-width="1" fill="none" />
<rect x="782.1" y="150.1" width="6.7" height="6.5" rx="0" stroke="none" stroke-width="0" fill="#f0a12c" />
<rect x="776.1" y="156.4" width="6.9" height="6.4" rx="0" stroke="none" stroke-width="0" fill="#f0a12c" />
<rect x="784.3" y="158.3" width="7.2" height="7.2" rx="0" stroke="#c4c4c4" stroke-width="1" fill="#292929" />
<path d="M780.504,184.602 L782.1,186.198 L783.696,184.602" stroke="#dedede" stroke-width="0.9" fill="none" stroke-linecap="round" stroke-linejoin="round"/>
<rect x="806.6" y="147.6" width="18.4" height="17.8" rx="0" stroke="#7c7c7c" stroke-width="1" fill="none" />
<path d="M826,153.4 l-9.4,8.6 q-2,2 -1.4,4 l-4.6,0.6 q2.6,-1.4 2.8,-4 z" stroke="#292929" stroke-width="2.4" fill="#292929" stroke-linejoin="round" stroke-linecap="round"/>
<path d="M825.6,153.8 l-9,8.4 q-1.4,1.6 -1,3.2 q-1.6,1 -4,0.8 q2.2,-1.2 2.4,-3.4 q0.6,-1.4 2.2,-1.4 z" stroke="#7c7c7c" stroke-width="0.8" fill="#707070" stroke-linejoin="round" stroke-linecap="round"/>
<path d="M824.804,185.202 L826.4,186.798 L827.996,185.202" stroke="#5e5e5e" stroke-width="0.9" fill="none" stroke-linecap="round" stroke-linejoin="round"/>
<path d="M837.6,151.6 l3.6,-3.6 l3.6,3.6 l-3.6,3.2 z M841,147.2 v-1 M844.8,151.6 q1.4,1.6 0,2.6" stroke="#7c7c7c" stroke-width="0.9" fill="none" stroke-linejoin="round" stroke-linecap="round"/>
<rect x="835.2" y="154.2" width="10.7" height="2.4" rx="0" stroke="none" stroke-width="0" fill="#6e6e6e" />
<path d="M886.404,151.602 L888,153.198 L889.596,151.602" stroke="#5e5e5e" stroke-width="0.9" fill="none" stroke-linecap="round" stroke-linejoin="round"/>
<path d="M844,166.6 v-2.4 h-8 v7 h3" stroke="#7c7c7c" stroke-width="0.9" fill="none" stroke-linejoin="round" stroke-linecap="round"/>
<path d="M845.4,164.4 l-5,5.4 l-1.6,0.6 l0.4,-1.6 l5,-5.4 z" stroke="#7c7c7c" stroke-width="0.8" fill="none" stroke-linejoin="round" stroke-linecap="round"/>
<rect x="835.2" y="172" width="10.7" height="2.4" rx="0" stroke="none" stroke-width="0" fill="#6e6e6e" />
<path d="M902.704,169.402 L904.3,170.998 L905.896,169.402" stroke="#5e5e5e" stroke-width="0.9" fill="none" stroke-linecap="round" stroke-linejoin="round"/>
<path d="M835.8,187 l3,-4.4 h6.8 l-3,4.4 z M835.8,187 v2.6 h6.8 v-2.6 M842.6,189.6 l3,-4.4 v-2.6" stroke="#d2d2d2" stroke-width="0.9" fill="#5a5a5a" stroke-linejoin="round" stroke-linecap="round"/>
<path d="M900.204,187.002 L901.8,188.598 L903.396,187.002" stroke="#5e5e5e" stroke-width="0.9" fill="none" stroke-linecap="round" stroke-linejoin="round"/>
<path d="M908.1,202.1 V199.1 H911.1" stroke="#5c5c5c" stroke-width="0.8" fill="none" />
<path d="M909.8000000000001,200.79999999999998 L912.8000000000001,203.79999999999998 M913.0,201.6 V204.0 H910.6" stroke="#5c5c5c" stroke-width="0.8" fill="none" />
<line x1="915.7" y1="144.5" x2="915.7" y2="204" stroke="#4c4c4c" stroke-width="1" />
<circle cx="930.9" cy="149.9" r="3.5" stroke="#dedede" stroke-width="1" fill="none" />
<path d="M928.4,152.5 l-4,4.2" stroke="#dedede" stroke-width="1" fill="none" stroke-linejoin="round" stroke-linecap="round"/>
<text x="927.6" y="168.4" font-family="Liberation Sans, sans-serif" font-size="6.6" fill="#c45bd0">b</text>
<text x="930.4" y="175" font-family="Liberation Sans, sans-serif" font-size="6.6" fill="#3a96dd">c</text>
<path d="M926.4,165.6 q-2.4,1.6 -1.6,4.6 M924.8,172 q2,2 4.4,1 M927.8,171.4 l1.4,1.6 l-1.8,1.2" stroke="#3a96dd" stroke-width="0.9" fill="none" stroke-linejoin="round" stroke-linecap="round"/>
<path d="M974.304,168.802 L975.9,170.398 L977.496,168.802" stroke="#dedede" stroke-width="0.9" fill="none" stroke-linecap="round" stroke-linejoin="round"/>
<path d="M925.6,182.4 v8.4 l2.2,-2 l1.6,3 l1.2,-0.6 l-1.5,-3 h3 z" stroke="#dedede" stroke-width="0.9" fill="none" stroke-linejoin="round" stroke-linecap="round"/>
<path d="M962.604,187.002 L964.2,188.598 L965.796,187.002" stroke="#dedede" stroke-width="0.9" fill="none" stroke-linecap="round" stroke-linejoin="round"/>
<line x1="986.6" y1="144.5" x2="986.6" y2="204" stroke="#4c4c4c" stroke-width="1" />
<rect x="1003.2" y="145.8" width="7.8" height="15.4" rx="3.9" stroke="none" stroke-width="0" fill="#1a73d0" />
<path d="M1000.6,156.4 q0,6.4 6.5,6.4 q6.5,0 6.5,-6.4 M1007.1,162.8 v3.4" stroke="#dedede" stroke-width="1" fill="none" stroke-linejoin="round" stroke-linecap="round"/>
<path d="M1004.904,185.102 L1006.5,186.698 L1008.096,185.102" stroke="#dedede" stroke-width="0.9" fill="none" stroke-linecap="round" stroke-linejoin="round"/>
<line x1="1026.3" y1="144.5" x2="1026.3" y2="204" stroke="#4c4c4c" stroke-width="1" />
<path d="M1052,147.4 h-7.6 v18.4 h13.6 v-8" stroke="#6a6a6a" stroke-width="0.9" fill="none" stroke-linejoin="round" stroke-linecap="round"/>
<path d="M1047.2,155.4 l5.2,-5.6 l4.6,4.4 l-5.2,5.6 z" stroke="#6a6a6a" stroke-width="0.9" fill="#292929" stroke-linejoin="round" stroke-linecap="round"/>
<path d="M1054,148 l2.6,-2.6 l2,1.8 l1.4,-1.4 l2.4,2.2 l-4,4.2 l-4.4,-4.2 z" stroke="#6a6a6a" stroke-width="0.9" fill="#292929" stroke-linejoin="round" stroke-linecap="round"/>
<path d="M1049.2,155.6 l3.4,3.2 M1050.6,154.2 l3.4,3.2 M1051.9,152.8 l3.4,3.2" stroke="#6a6a6a" stroke-width="0.7" fill="none" />
<path d="M1049.304,184.802 L1050.9,186.398 L1052.496,184.802" stroke="#5a5a5a" stroke-width="0.9" fill="none" stroke-linecap="round" stroke-linejoin="round"/>
<line x1="1076.6" y1="144.5" x2="1076.6" y2="204" stroke="#4c4c4c" stroke-width="1" />
<rect x="1090.4" y="149.4" width="18.2" height="14" rx="0.5" stroke="#a0a0a0" stroke-width="1" fill="none" />
<path d="M1090.4,153.4 h18.2 M1102.6,153.4 v10" stroke="#a0a0a0" stroke-width="1" fill="none" />
<line x1="1089.8" y1="163.6" x2="1109.2" y2="163.6" stroke="#e0e0e0" stroke-width="1.2" />
<path d="M1092.4,145.4 h4.8 l-1.8,4.8 h2.8 l-8,9.6 l1.9,-6.2 h-3 z" stroke="#292929" stroke-width="2.2" fill="#292929" stroke-linejoin="round" stroke-linecap="round"/>
<path d="M1092.4,145.4 h4.8 l-1.8,4.8 h2.8 l-8,9.6 l1.9,-6.2 h-3 z" stroke="#f3a62e" stroke-width="0.3" fill="#f3a62e" stroke-linejoin="round" stroke-linecap="round"/>
<line x1="1122.2" y1="144.5" x2="1122.2" y2="204" stroke="#4c4c4c" stroke-width="1" />
<path d="M1140.6,197.6 l3.2,3.2 l3.2,-3.2" stroke="#f0f0f0" stroke-width="1.1" fill="none" stroke-linejoin="round" stroke-linecap="round"/>
<path d="M105.9,216.2 l3.3,-4 l3.3,4 z" stroke="none" stroke-width="0" fill="#b4b4b4" />
<path d="M105.9,519.3 l3.3,4 l3.3,-4 z" stroke="none" stroke-width="0" fill="#b4b4b4" />
<path d="M27.200000000000003,225.4 l1.3,-2.8 l1.3,2.8 z" stroke="none" stroke-width="0" fill="#c0c0c0" />
<path d="M27.200000000000003,290.40000000000003 l1.3,-2.8 l1.3,2.8 z" stroke="none" stroke-width="0" fill="#c0c0c0" />
<path d="M27.200000000000003,355.1 l1.3,-2.8 l1.3,2.8 z" stroke="none" stroke-width="0" fill="#c0c0c0" />
<path d="M27.200000000000003,420.1 l1.3,-2.8 l1.3,2.8 z" stroke="none" stroke-width="0" fill="#c0c0c0" />
<path d="M27.200000000000003,484.6 l1.3,-2.8 l1.3,2.8 z" stroke="none" stroke-width="0" fill="#c0c0c0" />
<path d="M399.6,516 L401.0,515.3 L402.4,516.4 L403.8,515.3 L405.2,516.4 L406.6,515.3 L408.0,516.4 L409.4,515.3 L410.8,516.4 L412.2,515.3 L413.6,516.4 L415.0,515.3 L416.4,516.4 L417.8,515.3 L419.2,516.4 L420.6,515.3 L422.0,516.4 L423.4,515.3 L424.8,516.4 L426.2,515.3 L427.6,516.4 L429.0,515.3 L430.4,516.4 L431.8,515.3 L433.2,516.4 L434.6,515.3 L436.0,516.4 L437.4,515.3 L438.8,516.4 L440.2,515.3 L441.6,516.4 L443.0,515.3 L444.4,516.4 L445.8,515.3" stroke="#d9534f" stroke-width="0.7" fill="none" />
<path d="M1150.4,216.4 l2.9,-3.4 l2.9,3.4 z" stroke="#9a9a9a" stroke-width="0.3" fill="#b8b8b8" />
<path d="M1150.5,483 l2.8,3.2 l2.8,-3.2 z" stroke="#9a9a9a" stroke-width="0.3" fill="#b0b0b0" />
<path d="M1150.6,496.2 l2.7,-2.8 l2.7,2.8 z M1150.6,499.4 l2.7,-2.8 l2.7,2.8 z" stroke="#9a9a9a" stroke-width="0.3" fill="#b0b0b0" />
<path d="M1150.6,505 l2.7,2.8 l2.7,-2.8 z M1150.6,508.2 l2.7,2.8 l2.7,-2.8 z" stroke="#9a9a9a" stroke-width="0.3" fill="#b0b0b0" />
<path d="M1150.2,324.2 l-6.8,7.2 l6.8,7.2" stroke="#ffffff" stroke-width="1.9" fill="none" stroke-linecap="round" stroke-linejoin="round"/>
<circle cx="133.6" cy="531.6" r="1.1" stroke="#dcdcdc" stroke-width="0.8" fill="none" />
<path d="M130.6,533.6 h6.2 M133.7,533.6 v2.4 M133.7,536 l-2.6,3.6 M133.7,536 l2.6,3.6" stroke="#dcdcdc" stroke-width="0.8" fill="none" stroke-linecap="round"/>
<path d="M135.6,537.4 l3,3 M138.6,537.4 l-3,3" stroke="#dcdcdc" stroke-width="0.8" fill="none" />
<path d="M872.4,535.2 h10.6 M872.4,537.6 h10.6 M872.4,540 h10.6" stroke="#c8c8c8" stroke-width="0.9" fill="none" />
<path d="M875.4,532.6 l2.3,-2.4 l2.3,2.4" stroke="#c8c8c8" stroke-width="0.9" fill="none" stroke-linejoin="round"/>
<rect x="923.8" y="531.2" width="10.2" height="8.2" rx="0.4" stroke="#e0e0e0" stroke-width="0.9" fill="none" />
<path d="M926.6,531.2 v8.2 M926.6,533.2 h7 M926.6,537 h7" stroke="#e0e0e0" stroke-width="0.8" fill="none" />
<rect x="951.2" y="531.2" width="4" height="3.2" rx="0" stroke="#d0d0d0" stroke-width="0.8" fill="none" />
<rect x="956.8" y="531.2" width="4" height="3.2" rx="0" stroke="#d0d0d0" stroke-width="0.8" fill="none" />
<rect x="951.2" y="536.4" width="4" height="3.2" rx="0" stroke="#d0d0d0" stroke-width="0.8" fill="none" />
<rect x="956.8" y="536.4" width="4" height="3.2" rx="0" stroke="#d0d0d0" stroke-width="0.8" fill="none" />
<path d="M978.2,531.6 q2.4,-0.8 4.4,0.4 q2,-1.2 4.4,-0.4 v7.2 q-2.4,-0.8 -4.4,0.4 q-2,-1.2 -4.4,-0.4 z M982.6,532 v7.6" stroke="#d0d0d0" stroke-width="0.8" fill="none" stroke-linejoin="round"/>
<path d="M979.6,533.6 h1.8 M979.6,535.4 h1.8 M983.8,533.6 h1.8 M983.8,535.4 h1.8" stroke="#d0d0d0" stroke-width="0.6" fill="none" />
<path d="M1005.4,530.8 h9 M1006.2,530.8 v5.2 h7.4 v-5.2 M1009.9,536 v3.4 M1007.6,539.8 h4.6" stroke="#d0d0d0" stroke-width="0.9" fill="none" />
<line x1="1027.4" y1="535.4" x2="1032.8" y2="535.4" stroke="#d0d0d0" stroke-width="0.9" />
<line x1="1036.2" y1="535.4" x2="1103" y2="535.4" stroke="#b0b0b0" stroke-width="0.9" />
<rect x="1068.2" y="531.6" width="3.4" height="7.6" rx="0.6" stroke="none" stroke-width="0" fill="#c4c4c4" />
<path d="M1106.8,535.4 h5.4 M1109.5,532.7 v5.4" stroke="#d0d0d0" stroke-width="0.9" fill="none" />
<rect x="1148.2" y="532.6" width="5.4" height="5.4" rx="0" stroke="#d0d0d0" stroke-width="0.8" fill="none" />
<path d="M1149.6,531.2 l1.3,-1.3 l1.3,1.3 M1149.6,539.4 l1.3,1.3 l1.3,-1.3 M1146.8,534 l-1.3,1.3 l1.3,1.3 M1155,534 l1.3,1.3 l-1.3,1.3" stroke="#d0d0d0" stroke-width="0.8" fill="none" stroke-linejoin="round"/>
<defs><radialGradient id="wg" cx="0.4" cy="0.35" r="0.8"><stop offset="0" stop-color="#b4bcc4"/><stop offset="1" stop-color="#7c858e"/></radialGradient></defs>
<circle cx="13.4" cy="557.4" r="6.6" stroke="none" stroke-width="0" fill="url(#wg)" />
<path d="M14.2,563 q-2,0 -2,-1.8 q0,-1.8 2,-1.8 q0.8,-2 3,-2 q2.6,0 3.2,2.2 q1.8,0.2 1.8,1.8 q0,1.6 -1.8,1.6 z" stroke="none" stroke-width="0" fill="#e8ecf0" />
<defs><linearGradient id="win" x1="0" y1="0" x2="1" y2="1"><stop offset="0" stop-color="#6fd0fb"/><stop offset="1" stop-color="#1b9af0"/></linearGradient></defs>
<rect x="347.1" y="550.4" width="7.4" height="7.5" rx="0.4" stroke="none" stroke-width="0" fill="url(#win)" />
<rect x="355.2" y="550.4" width="7.4" height="7.5" rx="0.4" stroke="none" stroke-width="0" fill="url(#win)" />
<rect x="347.1" y="558.6" width="7.4" height="7.5" rx="0.4" stroke="none" stroke-width="0" fill="url(#win)" />
<rect x="355.2" y="558.6" width="7.4" height="7.5" rx="0.4" stroke="none" stroke-width="0" fill="url(#win)" />
<circle cx="383.4" cy="557.2" r="3.7" stroke="#ececec" stroke-width="1.2" fill="none" />
<path d="M386.2,560 l2.6,2.6" stroke="#ececec" stroke-width="1.3" fill="none" stroke-linejoin="round" stroke-linecap="round"/>
<circle cx="509.2" cy="557.4" r="6.3" stroke="none" stroke-width="0" fill="#f4f8fc" />
<path d="M505.2,562.4 l-1.6,2 l3.2,-0.8 z" stroke="none" stroke-width="0" fill="#f4f8fc" />
<path d="M507.6,553.4 v7.4 l2,1 l2.8,-1.6 v-1.8 l-2.6,-1 M507.6,553.4 l1.6,0.6 v6" stroke="#1a78d8" stroke-width="1.1" fill="none" stroke-linejoin="round" stroke-linecap="round"/>
<rect x="528.2" y="555" width="11.8" height="10.2" rx="0" stroke="none" stroke-width="0" fill="#7a7a7a" />
<rect x="532.3" y="550.4" width="11.8" height="10.3" rx="0" stroke="none" stroke-width="0" fill="#f0f0f0" />
<rect x="532.3" y="555" width="7.7" height="5.7" rx="0" stroke="none" stroke-width="0" fill="#b8b8b8" />
<defs><linearGradient id="tm" x1="0" y1="0" x2="1" y2="1"><stop offset="0" stop-color="#7b83eb"/><stop offset="1" stop-color="#5559c8"/></linearGradient></defs>
<circle cx="565.6" cy="557.4" r="7.6" stroke="none" stroke-width="0" fill="url(#tm)" />
<path d="M559,562 l-0.8,3.4 l4,-1.6 z" stroke="none" stroke-width="0" fill="#5a5fd0" />
<rect x="561.2" y="554.8" width="6" height="5.2" rx="0.8" stroke="none" stroke-width="0" fill="#ffffff" />
<path d="M567.6,556.6 l2.6,-1.6 v4.8 l-2.6,-1.6 z" stroke="none" stroke-width="0" fill="#ffffff" />
<defs><linearGradient id="eg" x1="0" y1="0" x2="1" y2="0.4"><stop offset="0" stop-color="#1a9ae0"/><stop offset="0.55" stop-color="#2bb4d4"/><stop offset="1" stop-color="#56d364"/></linearGradient></defs>
<circle cx="595.3" cy="558.2" r="8.3" stroke="none" stroke-width="0" fill="#1461b4" />
<path d="M587.2,556.6 a8.3,8.3 0 0 1 16.4,1.4 q0,3 -3.6,3 h-3.6 q-1,-3.6 -4,-3.8 q-3.4,0 -5.2,-0.6 z" stroke="none" stroke-width="0" fill="url(#eg)" />
<circle cx="594.4" cy="559.4" r="2.2" stroke="none" stroke-width="0" fill="#3a1418" />
<path d="M592.4,557.6 q-1.6,3.6 1.2,6.4 q2.6,2.2 6.4,0.4 q-4,0.4 -5.4,-2.4 q-0.8,-2 0,-3.4 z" stroke="none" stroke-width="0" fill="#0f4f9a" />
<rect x="617.3" y="552.6" width="15.4" height="13.4" rx="1.8" stroke="none" stroke-width="0" fill="#f3f3f3" />
<path d="M620.6,552.8 v-1.6 q0,-1 1,-1 h6.8 q1,0 1,1 v1.6" stroke="#2d9be8" stroke-width="1.4" fill="none" />
<rect x="621.6" y="555.6" width="3" height="3" rx="0" stroke="none" stroke-width="0" fill="#f25022" />
<rect x="625.4" y="555.6" width="3" height="3" rx="0" stroke="none" stroke-width="0" fill="#7fba00" />
<rect x="621.6" y="559.4" width="3" height="3" rx="0" stroke="none" stroke-width="0" fill="#00a4ef" />
<rect x="625.4" y="559.4" width="3" height="3" rx="0" stroke="none" stroke-width="0" fill="#ffb900" />
<rect x="646.2" y="549.9" width="16.8" height="16.1" rx="0.6" stroke="none" stroke-width="0" fill="#1366c6" />
<path d="M654.6,552.4 l5,2.9 v5.8 l-5,2.9 l-5,-2.9 v-5.8 z" stroke="#e6f0fa" stroke-width="0.9" fill="none" stroke-linejoin="round" stroke-linecap="round"/>
<path d="M654.6,555 l2.8,1.6 v3.2 l-2.8,1.6 l-2.8,-1.6 v-3.2 z" stroke="#e6f0fa" stroke-width="0.8" fill="none" stroke-linejoin="round" stroke-linecap="round"/>
<defs><radialGradient id="ff" cx="0.6" cy="0.25" r="0.9"><stop offset="0" stop-color="#ffe226"/><stop offset="0.35" stop-color="#ff9a1f"/><stop offset="0.75" stop-color="#ff3b47"/><stop offset="1" stop-color="#c6178a"/></radialGradient></defs>
<circle cx="684.2" cy="558.4" r="7.2" stroke="none" stroke-width="0" fill="url(#ff)" />
<path d="M684.6,550.2 q3,1 3.4,4 q2.6,0.4 3.4,3 q0.2,-3.6 -2,-5.6 q-2,-1.8 -4.8,-1.4 z" stroke="none" stroke-width="0" fill="#ffd43a" />
<circle cx="683.8" cy="558.2" r="3.2" stroke="none" stroke-width="0" fill="#7a3fd8" />
<path d="M680,556.4 q2,-1.6 4.4,-0.6 q-1.6,0.8 -1.4,2.4 q-2,0.4 -3,-1.8 z" stroke="none" stroke-width="0" fill="#ff8a2a" />
<path d="M705.8,552.6 q0,-1 1,-1 h4.4 l1.6,1.4 h8.2 q1,0 1,1 v10.4 q0,1 -1,1 h-14.2 q-1,0 -1,-1 z" stroke="none" stroke-width="0" fill="#f5c238" />
<rect x="705.8" y="553.8" width="16.2" height="11.6" rx="0.8" stroke="none" stroke-width="0" fill="#fbd65a" />
<path d="M708.8,565.4 v-3.2 q0,-1.2 1.2,-1.2 h7.8 q1.2,0 1.2,1.2 v3.2 z" stroke="none" stroke-width="0" fill="#1d7bd4" />
<circle cx="743.8" cy="558" r="8.1" stroke="none" stroke-width="0" fill="#1ed760" />
<path d="M739,555.2 q5,-1.4 9.8,0.8" stroke="#101010" stroke-width="1.5" fill="none" stroke-linejoin="round" stroke-linecap="round"/>
<path d="M739.6,558.2 q4.4,-1.2 8.4,0.8" stroke="#101010" stroke-width="1.3" fill="none" stroke-linejoin="round" stroke-linecap="round"/>
<path d="M740.2,561 q3.6,-1 7,0.6" stroke="#101010" stroke-width="1.1" fill="none" stroke-linejoin="round" stroke-linecap="round"/>
<rect x="765.2" y="549.9" width="16.7" height="16.1" rx="1.6" stroke="none" stroke-width="0" fill="#1a73ea" />
<path d="M767.4,561.2 l3.6,-5 l1.6,2 l2,-2.8 l4.6,5.8 z" stroke="none" stroke-width="0" fill="#ffffff" />
<path d="M769.6,558.2 l1.4,-2 l1,1.4 z" stroke="none" stroke-width="0" fill="#9cc4f8" />
<rect x="777.6" y="550.2" width="4" height="4" rx="0.6" stroke="none" stroke-width="0" fill="#8ab8f4" />
<defs><linearGradient id="pp2" x1="0" y1="0" x2="1" y2="1"><stop offset="0" stop-color="#f08a62"/><stop offset="1" stop-color="#c8492a"/></linearGradient></defs>
<circle cx="803.8" cy="558" r="7.4" stroke="none" stroke-width="0" fill="url(#pp2)" />
<path d="M803.8,550.6 a7.4,7.4 0 0 1 7.4,7.4 h-7.4 z" stroke="none" stroke-width="0" fill="#f29a78" />
<rect x="794.9" y="554.6" width="6.6" height="6.8" rx="0.8" stroke="none" stroke-width="0" fill="#c8472a" />
<text x="796.3" y="560.4" font-family="Liberation Sans, sans-serif" font-size="6.4" font-weight="bold" fill="#ffffff">P</text>
<path d="M954.4,559.6 l3.6,-3.4 l3.6,3.4" stroke="#f0f0f0" stroke-width="1.1" fill="none" stroke-linejoin="round" stroke-linecap="round"/>
<path d="M975.8,561.2 q-1.8,0 -1.8,-1.7 q0,-1.6 1.7,-1.8 q0.5,-2.6 3.1,-2.6 q2.2,0 3,2 q1.6,0.3 1.6,2 q0,2.1 -2,2.1 z" stroke="none" stroke-width="0" fill="#b0b0b4" />
<path d="M976.4,558 q1.2,-2.8 3.6,-2.4 q-2,1 -2.6,3.4 z" stroke="none" stroke-width="0" fill="#e8e8ec" />
<circle cx="982.2" cy="559.8" r="3" stroke="none" stroke-width="0" fill="#f4d820" />
<text x="981.5" y="561.8" font-family="Liberation Sans, sans-serif" font-size="5" font-weight="bold" fill="#5a4a00">!</text>
<rect x="999.2" y="552.2" width="4.2" height="7.6" rx="2.1" stroke="#cc6a4c" stroke-width="1" fill="none" />
<path d="M997.6,557.6 q0,3.8 3.7,3.8 q3.7,0 3.7,-3.8 M1001.3,561.4 v2" stroke="#cc6a4c" stroke-width="1" fill="none" stroke-linejoin="round" stroke-linecap="round"/>
<circle cx="1052.6" cy="561.2" r="0.9" stroke="none" stroke-width="0" fill="#f0f0f0" />
<path d="M1050.4,559.4 q2.2,-1.8 4.4,0" stroke="#f0f0f0" stroke-width="0.9" fill="none" stroke-linejoin="round" stroke-linecap="round"/>
<path d="M1049,557.6 q3.6,-2.8 7.2,0" stroke="#f0f0f0" stroke-width="0.9" fill="none" stroke-linejoin="round" stroke-linecap="round"/>
<path d="M1047.8,555.8 q4.8,-3.6 9.6,0" stroke="#8a8a8a" stroke-width="0.8" fill="none" stroke-linejoin="round" stroke-linecap="round"/>
<path d="M1063,556.4 h2.2 l2.8,-2.4 v8 l-2.8,-2.4 h-2.2 z" stroke="#f0f0f0" stroke-width="0.9" fill="none" stroke-linejoin="round" stroke-linecap="round"/>
<path d="M1069.6,556 q1,2 0,4" stroke="#f0f0f0" stroke-width="0.9" fill="none" stroke-linejoin="round" stroke-linecap="round"/>
<path d="M1071.4,554.6 q1.8,3.4 0,6.8" stroke="#a0a0a0" stroke-width="0.8" fill="none" stroke-linejoin="round" stroke-linecap="round"/>
<path d="M1136.6,560.4 q0.8,-1 0.8,-3 q0,-3.4 3,-3.4 q3,0 3,3.4 q0,2 0.8,3 z" stroke="#f4f4f4" stroke-width="0.8" fill="#f4f4f4" stroke-linejoin="round" stroke-linecap="round"/>
<path d="M1139.2,561.6 q1.2,1.4 2.4,0" stroke="#f4f4f4" stroke-width="0.9" fill="none" stroke-linejoin="round" stroke-linecap="round"/>
<circle cx="1140.4" cy="557.4" r="1.4" stroke="none" stroke-width="0" fill="#2a2a2a" />
<text x="1142.4" y="555.8" font-family="Liberation Sans, sans-serif" font-size="4" font-weight="bold" fill="#f4f4f4">z</text>
</svg>
<span class="t" style='left:31.25px;top:101.15px;font-size:8.6px;color:#6e6e6e;transform:scaleX(0.9053);'>AutoSave</span>
<span class="t" style='left:73.6px;top:101.65px;font-size:7.2px;color:#1c1c1c;transform:scaleX(0.9381);'>On</span>
<span class="t" style='left:216.75px;top:101.15px;font-size:8.6px;color:#6e6e6e;transform:scaleX(0.9590);'>UWA • Last Modified: Mon at 9:55 AM</span>
<span class="t" style='left:460.75px;top:101.15px;font-size:8.6px;color:#6e6e6e;transform:scaleX(0.9455);'>Search</span>
<span class="t" style='left:970.5px;top:101.15px;font-size:8.6px;color:#6e6e6e;transform:scaleX(0.9356);'>louise lu</span>
<span class="t" style='left:13px;top:127.40px;font-size:9.3px;color:#e4e4e4;transform:scaleX(0.9343);'>File</span>
<span class="t" style='left:43.75px;top:127.40px;font-size:9.3px;color:#ffffff;font-weight:bold;transform:scaleX(0.9674);'>Home</span>
<span class="t" style='left:81.75px;top:127.40px;font-size:9.3px;color:#e4e4e4;transform:scaleX(0.9456);'>Insert</span>
<span class="t" style='left:117px;top:127.40px;font-size:9.3px;color:#e4e4e4;transform:scaleX(0.9446);'>Draw</span>
<span class="t" style='left:150.75px;top:127.40px;font-size:9.3px;color:#e4e4e4;transform:scaleX(0.9584);'>Design</span>
<span class="t" style='left:192px;top:127.40px;font-size:9.3px;color:#e4e4e4;transform:scaleX(0.9529);'>Transitions</span>
<span class="t" style='left:249px;top:127.40px;font-size:9.3px;color:#e4e4e4;transform:scaleX(0.9783);'>Animations</span>
<span class="t" style='left:307.25px;top:127.40px;font-size:9.3px;color:#e4e4e4;transform:scaleX(0.9405);'>Slide Show</span>
<span class="t" style='left:364.5px;top:127.40px;font-size:9.3px;color:#e4e4e4;transform:scaleX(0.9171);'>Record</span>
<span class="t" style='left:405.5px;top:127.40px;font-size:9.3px;color:#e4e4e4;transform:scaleX(0.9103);'>Review</span>
<span class="t" style='left:445.75px;top:127.40px;font-size:9.3px;color:#e4e4e4;transform:scaleX(0.9758);'>View</span>
<span class="t" style='left:477.75px;top:127.40px;font-size:9.3px;color:#e4e4e4;transform:scaleX(0.9804);'>Help</span>
<span class="t" style='left:1031.75px;top:126.95px;font-size:8.8px;color:#e6e6e6;transform:scaleX(0.9697);'>Record</span>
<span class="t" style='left:1114.25px;top:126.95px;font-size:8.8px;color:#111111;transform:scaleX(0.9581);'>Share</span>
<span class="t" style='left:17.3px;top:171.90px;font-size:8.1px;color:#5e5e5e;transform:scaleX(0.8501);'>Paste</span>
<span class="t" style='left:58.3px;top:148.60px;font-size:8.1px;color:#5e5e5e;transform:scaleX(0.9596);'>Cut</span>
<span class="t" style='left:58.3px;top:166.40px;font-size:8.1px;color:#5e5e5e;transform:scaleX(0.9415);'>Copy</span>
<span class="t" style='left:58.5px;top:183.70px;font-size:8.1px;color:#5e5e5e;transform:scaleX(0.9677);'>Format Painter</span>
<span class="t" style='left:43.9px;top:198.20px;font-size:7.9px;color:#e6e6e6;transform:scaleX(0.8614);'>Clipboard</span>
<span class="t" style='left:133px;top:171.20px;font-size:8.1px;color:#dedede;transform:scaleX(0.9875);'>New</span>
<span class="t" style='left:128.6px;top:181.60px;font-size:8.1px;color:#dedede;transform:scaleX(0.9333);'>Slide</span>
<span class="t" style='left:172.8px;top:148.50px;font-size:8.1px;color:#dedede;transform:scaleX(0.9954);'>Layout</span>
<span class="t" style='left:172.9px;top:166.30px;font-size:8.1px;color:#dedede;transform:scaleX(0.8934);'>Reset</span>
<span class="t" style='left:172.9px;top:183.80px;font-size:8.1px;color:#dedede;transform:scaleX(0.9815);'>Section</span>
<span class="t" style='left:160.8px;top:198.20px;font-size:7.9px;color:#e6e6e6;transform:scaleX(0.8047);'>Slides</span>
<span class="t" style='left:373.8px;top:151.10px;font-size:11.5px;color:#adadad;'>A</span>
<span class="t" style='left:392.6px;top:152.45px;font-size:10px;color:#adadad;'>A</span>
<span class="t" style='left:410.6px;top:151.10px;font-size:11.5px;color:#adadad;'>A</span>
<span class="t" style='left:229.2px;top:173.95px;font-size:8.8px;color:#b8b8b8;font-weight:bold;'>B</span>
<span class="t" style='left:248px;top:173.75px;font-size:9.2px;color:#b0b0b0;font-family:"Liberation Serif", serif;font-style:italic;'>I</span>
<span class="t" style='left:263.7px;top:173.65px;font-size:8.8px;color:#c0c0c0;'>U</span>
<span class="t" style='left:281.6px;top:174.15px;font-size:9px;color:#bcbcbc;font-weight:bold;'>S</span>
<span class="t" style='left:297.6px;top:174.75px;font-size:8.2px;color:#9a9a9a;transform:scaleX(0.9660);'>ab</span>
<span class="t" style='left:314.2px;top:172.95px;font-size:8.2px;color:#b4b4b4;transform:scaleX(1.0263);'>AV</span>
<span class="t" style='left:342.4px;top:173.85px;font-size:9.6px;color:#b4b4b4;transform:scaleX(0.9872);'>Aa</span>
<span class="t" style='left:402.8px;top:172.65px;font-size:9.6px;color:#b4b4b4;'>A</span>
<span class="t" style='left:311.9px;top:198.20px;font-size:7.9px;color:#e6e6e6;transform:scaleX(0.8166);'>Font</span>
<span class="t" style='left:574.1px;top:148.60px;font-size:8.1px;color:#5e5e5e;transform:scaleX(0.9994);'>Text Direction</span>
<span class="t" style='left:574.1px;top:166.30px;font-size:8.1px;color:#5e5e5e;transform:scaleX(1.0013);'>Align Text</span>
<span class="t" style='left:574.1px;top:183.80px;font-size:8.1px;color:#5e5e5e;transform:scaleX(0.9940);'>Convert to SmartArt</span>
<span class="t" style='left:526px;top:198.20px;font-size:7.9px;color:#e6e6e6;transform:scaleX(0.8519);'>Paragraph</span>
<span class="t" style='left:768.6px;top:171.20px;font-size:8.1px;color:#f0f0f0;transform:scaleX(0.9619);'>Arrange</span>
<span class="t" style='left:805.1px;top:171.20px;font-size:8.1px;color:#5e5e5e;transform:scaleX(0.9660);'>Quick</span>
<span class="t" style='left:801.3px;top:182.00px;font-size:8.1px;color:#5e5e5e;transform:scaleX(0.9026);'>Styles</span>
<span class="t" style='left:848.9px;top:148.60px;font-size:8.1px;color:#5e5e5e;transform:scaleX(0.9472);'>Shape Fill</span>
<span class="t" style='left:848.9px;top:166.30px;font-size:8.1px;color:#5e5e5e;transform:scaleX(0.9822);'>Shape Outline</span>
<span class="t" style='left:848.9px;top:183.80px;font-size:8.1px;color:#5e5e5e;transform:scaleX(0.9532);'>Shape Effects</span>
<span class="t" style='left:771.7px;top:198.20px;font-size:7.9px;color:#e6e6e6;transform:scaleX(0.8980);'>Drawing</span>
<span class="t" style='left:938px;top:148.60px;font-size:8.1px;color:#dedede;transform:scaleX(0.9524);'>Find</span>
<span class="t" style='left:938px;top:166.30px;font-size:8.1px;color:#dedede;transform:scaleX(0.9090);'>Replace</span>
<span class="t" style='left:938px;top:183.80px;font-size:8.1px;color:#dedede;transform:scaleX(0.9378);'>Select</span>
<span class="t" style='left:940.8px;top:198.20px;font-size:7.9px;color:#e6e6e6;transform:scaleX(0.8782);'>Editing</span>
<span class="t" style='left:993.9px;top:171.70px;font-size:8.1px;color:#f0f0f0;transform:scaleX(0.9999);'>Dictate</span>
<span class="t" style='left:998px;top:198.20px;font-size:7.9px;color:#e6e6e6;transform:scaleX(0.8492);'>Voice</span>
<span class="t" style='left:1033.3px;top:171.20px;font-size:8.1px;color:#5a5a5a;transform:scaleX(0.9825);'>Sensitivity</span>
<span class="t" style='left:1035.9px;top:198.20px;font-size:7.9px;color:#e6e6e6;transform:scaleX(0.8753);'>Sensitivity</span>
<span class="t" style='left:1083.9px;top:171.20px;font-size:8.1px;color:#f0f0f0;transform:scaleX(0.9659);'>Designer</span>
<span class="t" style='left:1085.7px;top:198.20px;font-size:7.9px;color:#e6e6e6;transform:scaleX(0.8709);'>Designer</span>
<span class="t" style='left:7.4px;top:219.45px;font-size:9.4px;color:#e0e0e0;'>1</span>
<span class="t" style='left:38.9px;top:241.70px;font-size:3.5px;color:#000;font-family:"Liberation Serif", serif;font-weight:bold;transform:scaleX(0.8466);'>Social Learning in Auditing</span>
<span class="t" style='left:27.2px;top:260.60px;font-size:2.5px;color:#3a4a55;font-family:"Liberation Serif", serif;transform:scaleX(0.8849);'>Chen Chen</span>
<span class="t" style='left:29px;top:263.60px;font-size:2.5px;color:#3a4a55;font-family:"Liberation Serif", serif;transform:scaleX(0.8434);'>Monash</span>
<span class="t" style='left:47.2px;top:260.60px;font-size:2.5px;color:#3a4a55;font-family:"Liberation Serif", serif;transform:scaleX(0.8914);'>Eunice Khoo</span>
<span class="t" style='left:51px;top:263.60px;font-size:2.5px;color:#3a4a55;font-family:"Liberation Serif", serif;transform:scaleX(0.6663);'>UWA</span>
<span class="t" style='left:66.9px;top:260.60px;font-size:2.5px;color:#3a4a55;font-family:"Liberation Serif", serif;transform:scaleX(0.9101);'>Louise Lu</span>
<span class="t" style='left:69.7px;top:263.60px;font-size:2.5px;color:#3a4a55;font-family:"Liberation Serif", serif;transform:scaleX(0.7014);'>UWA</span>
<span class="t" style='left:7.4px;top:284.45px;font-size:9.4px;color:#e0e0e0;'>2</span>
<span class="t" style='left:27.2px;top:294.85px;font-size:4.0px;color:#3f5f8c;transform:scaleX(0.8117);'>Motivation</span>
<span class="t" style='left:7.4px;top:349.15px;font-size:9.4px;color:#e0e0e0;'>3</span>
<span class="t" style='left:27.2px;top:359.55px;font-size:4.0px;color:#3f5f8c;transform:scaleX(0.8117);'>Motivation</span>
<span class="t" style='left:7.4px;top:414.15px;font-size:9.4px;color:#e0e0e0;'>4</span>
<span class="t" style='left:27.2px;top:424.55px;font-size:4.0px;color:#3f5f8c;transform:scaleX(0.8257);'>Literature Review</span>
<span class="t" style='left:7.4px;top:478.65px;font-size:9.4px;color:#e0e0e0;'>5</span>
<span class="t" style='left:27.2px;top:489.05px;font-size:4.0px;color:#3f5f8c;transform:scaleX(0.8257);'>Literature Review</span>
<span class="t" style='left:461.6px;top:307.15px;font-size:30.2px;color:#000000;font-family:"Liberation Serif", serif;font-weight:bold;transform:scaleX(0.9549);'>Social Learning in Auditing</span>
<span class="t" style='left:348.3px;top:496.05px;font-size:22.2px;color:#0a0a0a;font-family:"Liberation Serif", serif;transform:scaleX(0.9706);'>Chen Chen</span>
<span class="t" style='left:542.6px;top:496.05px;font-size:22.2px;color:#0a0a0a;font-family:"Liberation Serif", serif;transform:scaleX(0.9600);'>Eunice Khoo</span>
<span class="t" style='left:738px;top:496.05px;font-size:22.2px;color:#0a0a0a;font-family:"Liberation Serif", serif;transform:scaleX(0.9603);'>Louise Lu</span>
<span class="t" style='left:3.8px;top:531.65px;font-size:8.0px;color:#868686;transform:scaleX(0.8700);'>Slide 1 of 40</span>
<span class="t" style='left:63.8px;top:531.65px;font-size:8.0px;color:#e0e0e0;transform:scaleX(0.8549);'>English (Australia)</span>
<span class="t" style='left:142px;top:531.65px;font-size:8.0px;color:#e0e0e0;transform:scaleX(0.8650);'>Accessibility: Investigate</span>
<span class="t" style='left:884.8px;top:531.65px;font-size:8.0px;color:#e0e0e0;transform:scaleX(0.8706);'>Notes</span>
<span class="t" style='left:1121px;top:531.65px;font-size:8.0px;color:#e0e0e0;transform:scaleX(0.8305);'>100%</span>
<span class="t" style='left:396.5px;top:554.05px;font-size:9.2px;color:#e4e4e4;transform:scaleX(0.9373);'>Search</span>
<span class="t" style='left:1019px;top:549.05px;font-size:8.4px;color:#f0f0f0;transform:scaleX(0.8592);'>ENG</span>
<span class="t" style='left:1022px;top:559.95px;font-size:8.4px;color:#f0f0f0;transform:scaleX(0.8591);'>US</span>
<span class="t" style='left:1093px;top:548.65px;font-size:8.6px;color:#f0f0f0;transform:scaleX(0.9335);'>11:01 AM</span>
<span class="t" style='left:1085.8px;top:559.15px;font-size:8.6px;color:#f0f0f0;transform:scaleX(0.9508);'>12/06/2023</span>
<div class="wm" style="left:78.0px;top:288.0px">221611152<span class="wc">沙煜晗</span> +8618751080216</div>
<div class="wm" style="left:341.5px;top:288.0px">221611152<span class="wc">沙煜晗</span> +8618751080216</div>
<div class="wm" style="left:605.0px;top:288.0px">221611152<span class="wc">沙煜晗</span> +8618751080216</div>
<div class="wm" style="left:868.5px;top:288.0px">221611152<span class="wc">沙煜晗</span> +8618751080216</div>
<div class="wm" style="left:78.0px;top:551.5px">221611152<span class="wc">沙煜晗</span> +8618751080216</div>
<div class="wm" style="left:341.5px;top:551.5px">221611152<span class="wc">沙煜晗</span> +8618751080216</div>
<div class="wm" style="left:605.0px;top:551.5px">221611152<span class="wc">沙煜晗</span> +8618751080216</div>
<div class="wm" style="left:868.5px;top:551.5px">221611152<span class="wc">沙煜晗</span> +8618751080216</div>
<svg class="ic" viewBox="0 0 1157 637" width="1157" height="637"><path d="M1023,134.2 v10.6 l2.5,-2.3 l1.8,4 l1.6,-0.8 l-1.8,-3.9 h3.4 z" fill="#ffffff" stroke="#111111" stroke-width="0.7" stroke-linejoin="round"/></svg>
</div>
</body>
</html>
